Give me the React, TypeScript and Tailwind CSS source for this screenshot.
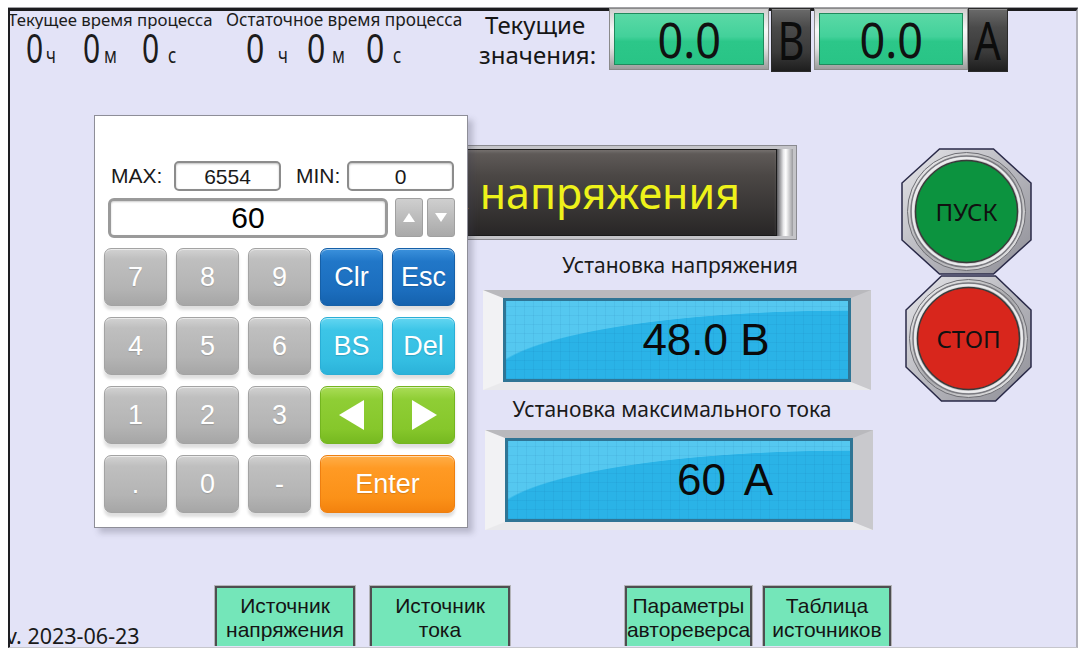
import React from "react";

const NOTO = "font-['Noto_Sans',sans-serif]";
const ARIAL = "font-['Liberation_Sans',Arial,sans-serif]";

type Tone = "gray" | "blue" | "cyan" | "green" | "orange";

const toneClass: Record<Tone, string> = {
  gray: "bg-[linear-gradient(180deg,#d2d2d2_0%,#bfbfbf_18%,#b4b4b4_70%,#a6a6a6_100%)] border-[#a3a3a3]",
  blue: "bg-[linear-gradient(180deg,#3b91dc_0%,#2177c8_22%,#1b6dbd_75%,#1562ae_100%)] border-[#1660a8]",
  cyan: "bg-[linear-gradient(180deg,#63d6f1_0%,#3cc5e7_22%,#34bee2_75%,#2bb2d9_100%)] border-[#2aaed6]",
  green: "bg-[linear-gradient(180deg,#aadd57_0%,#8fce35_22%,#86c72b_75%,#76b920_100%)] border-[#74b520]",
  orange: "bg-[linear-gradient(180deg,#ffae48_0%,#ff9a24_22%,#fb9118_75%,#f3820e_100%)] border-[#ee7f10]",
};

function Key({ tone = "gray", wide = false, children }: { tone?: Tone; wide?: boolean; children: React.ReactNode }) {
  return (
    <div
      className={`${toneClass[tone]} ${wide ? "col-span-2" : ""} h-[58px] rounded-[7px] border flex items-center justify-center text-white text-[27px] ${ARIAL} shadow-[inset_0_1px_0_rgba(255,255,255,0.55),0_4px_3px_rgba(0,0,0,0.13)] [text-shadow:0_1px_1px_rgba(0,0,0,0.15)]`}
    >
      {children}
    </div>
  );
}

function Triangle({ dir }: { dir: "left" | "right" }) {
  return (
    <svg width="30" height="32" viewBox="0 0 30 32">
      {dir === "left" ? <polygon points="27,1 27,31 2,16" fill="#fff" /> : <polygon points="3,1 3,31 28,16" fill="#fff" />}
    </svg>
  );
}

function Keypad() {
  return (
    <div className="absolute left-[94px] top-[115px] w-[374px] h-[413px] bg-white border border-[#8e8e98] shadow-[5px_5px_6px_rgba(60,60,80,0.25)] pt-[45px]">
      {/* limits */}
      <div className={`flex items-center h-[30px] ${ARIAL} text-[21px] text-[#1a1a1a]`}>
        <span className="ml-[16px] w-[63px]">MAX:</span>
        <div className="w-[107px] h-[30px] rounded-[5px] border-2 border-[#8c8c8c] shadow-[inset_0_1px_2px_rgba(0,0,0,0.25)] flex items-center justify-center text-[21px] leading-none">6554</div>
        <span className="ml-[15px] w-[51px]">MIN:</span>
        <div className="w-[107px] h-[30px] rounded-[5px] border-2 border-[#8c8c8c] shadow-[inset_0_1px_2px_rgba(0,0,0,0.25)] flex items-center justify-center text-[21px] leading-none">0</div>
      </div>
      {/* current entry */}
      <div className="flex mt-[7px] h-[40px]">
        <div className={`ml-[13px] w-[280px] h-[40px] rounded-[6px] border-[3px] border-[#9a9a9a] shadow-[inset_0_1px_2px_rgba(0,0,0,0.2)] flex items-center justify-center ${ARIAL} text-[30px] text-black leading-none`}>60</div>
        <div className="ml-[7px] w-[28px] h-[39px] rounded-[3px] bg-[linear-gradient(180deg,#cfcfcf,#a9a9a9)] border border-[#a0a0a0] flex items-center justify-center">
          <svg width="12" height="9" viewBox="0 0 12 9"><polygon points="6,0 12,9 0,9" fill="#fff" /></svg>
        </div>
        <div className="ml-[4px] w-[28px] h-[39px] rounded-[3px] bg-[linear-gradient(180deg,#cfcfcf,#a9a9a9)] border border-[#a0a0a0] flex items-center justify-center">
          <svg width="12" height="9" viewBox="0 0 12 9"><polygon points="0,0 12,0 6,9" fill="#fff" /></svg>
        </div>
      </div>
      {/* keys */}
      <div className="ml-[9px] mt-[10px] grid grid-cols-[63px_63px_63px_63px_63px] gap-x-[9px] gap-y-[11px]">
        <Key>7</Key>
        <Key>8</Key>
        <Key>9</Key>
        <Key tone="blue">Clr</Key>
        <Key tone="blue">Esc</Key>
        <Key>4</Key>
        <Key>5</Key>
        <Key>6</Key>
        <Key tone="cyan">BS</Key>
        <Key tone="cyan">Del</Key>
        <Key>1</Key>
        <Key>2</Key>
        <Key>3</Key>
        <Key tone="green"><Triangle dir="left" /></Key>
        <Key tone="green"><Triangle dir="right" /></Key>
        <Key>.</Key>
        <Key>0</Key>
        <Key>-</Key>
        <Key tone="orange" wide>Enter</Key>
      </div>
    </div>
  );
}

function GreenReadout({ w }: { w: string }) {
  return (
    <div className={`${w} h-[62px] p-[4px] border border-[#8a8a8a] bg-[linear-gradient(180deg,#cfcfcf_0%,#f7f7f7_35%,#e2e2e2_65%,#9c9c9c_100%)]`}>
      <div className="h-full border border-[#1f8a5c] bg-[linear-gradient(180deg,#5ad9a6_0%,#43d19a_45%,#2cc789_55%,#29c486_100%)] flex items-center justify-center">
        <span className={`${NOTO} text-[50px] leading-[50px] text-[#111] inline-block scale-x-90`}>0.0</span>
      </div>
    </div>
  );
}

function UnitTile({ children }: { children: React.ReactNode }) {
  return (
    <div className="w-[40px] h-[64px] bg-[linear-gradient(180deg,#6a6a6a_0%,#4a4a4a_30%,#3a3a3a_70%,#1e1e1e_100%)] border border-[#2a2a2a] flex items-center justify-center shadow-[inset_0_1px_0_rgba(255,255,255,0.25)]">
      <span className={`${NOTO} text-[52px] leading-[56px] text-[#0c0c0c] inline-block scale-x-80`}>{children}</span>
    </div>
  );
}

function BlueReadout({ shift, children }: { shift: string; children: React.ReactNode }) {
  return (
    <div className="w-[388px] h-[100px] border border-[#8f8f96] border-l-[20px] border-l-[#f2f2f4] border-t-[8px] border-t-[#b9b9bd] border-r-[20px] border-r-[#c9c9cd] border-b-[8px] border-b-[#e9e9ec]">
      <div className="h-full border-[3px] border-[#2f7595] bg-[repeating-linear-gradient(90deg,rgba(10,80,140,0.07)_0_1px,transparent_1px_9px),repeating-linear-gradient(0deg,rgba(10,80,140,0.07)_0_1px,transparent_1px_9px),radial-gradient(ellipse_105%_88%_at_100%_100%,#2ab3e7_99%,#55c8f0_100%)] flex items-center justify-center">
        <span className={`${ARIAL} text-[44px] leading-none text-[#0a0a0a] whitespace-pre ${shift}`}>{children}</span>
      </div>
    </div>
  );
}

function Pushbutton({ w, color, label }: { w: number; color: string; label: string }) {
  const id = label === "ПУСК" ? "a" : "b";
  const cx = w / 2;
  const c = 8 + (w - 122) * 0.5;
  return (
    <div className="relative">
      <svg width={w} height="127" viewBox={`0 0 ${w} 127`}>
        <defs>
          <linearGradient id={`m${id}`} x1="0" y1="0" x2="1" y2="1">
            <stop offset="0" stopColor="#e6e6ea" />
            <stop offset="0.5" stopColor="#b8b8be" />
            <stop offset="1" stopColor="#8e8e96" />
          </linearGradient>
          <linearGradient id={`r${id}`} x1="0" y1="0" x2="1" y2="1">
            <stop offset="0" stopColor="#fafafa" />
            <stop offset="0.5" stopColor="#a8a8ac" />
            <stop offset="1" stopColor="#f0f0f0" />
          </linearGradient>
        </defs>
        <polygon
          points={`${c + 26},1 ${w - c - 26},1 ${w - 1},${35} ${w - 1},${92} ${w - c - 26},126 ${c + 26},126 1,${92} 1,${35}`}
          fill={`url(#m${id})`}
          stroke="#2a2a48"
          strokeWidth="1.5"
        />
        <circle cx={cx} cy="63.5" r="59" fill={`url(#r${id})`} stroke="#6e6e74" strokeWidth="1" />
        <circle cx={cx} cy="63.5" r="55.5" fill="none" stroke="#7a7a80" strokeWidth="1.5" />
        <circle cx={cx} cy="63.5" r="53.5" fill="none" stroke="#ececee" strokeWidth="2" />
        <circle cx={cx} cy="63.5" r="51" fill={color} stroke="#3a3a3a" strokeWidth="1.5" />
      </svg>
      <span className={`absolute inset-0 flex items-center justify-center ${NOTO} text-[24px] text-[#111]`}>{label}</span>
    </div>
  );
}

function NavButton({ w, ml, lines }: { w: string; ml: string; lines: [string, string] }) {
  return (
    <div className={`${w} ${ml} h-[64px] shrink-0 border border-[#b4b4b8] p-0`}>
      <div className={`h-full border-2 border-[#4e4e50] bg-[#74e6b9] flex flex-col items-center pt-[6px] ${ARIAL} text-[21px] leading-[24px] text-[#141414] whitespace-nowrap`}>
        <span>{lines[0]}</span>
        <span>{lines[1]}</span>
      </div>
    </div>
  );
}

export default function App() {
  return (
    <div className="relative w-[1080px] h-[648px] bg-white overflow-hidden">
      <div className="ml-[8px] mt-[8px] w-[1070px] h-[640px] bg-[#e3e3f7] border-l-2 border-l-[#1e1e22] border-t-[3px] border-t-[#1c1c1e] border-r-2 border-r-[#b2b2ba] border-b border-b-[#c6c6cc] shadow-[0_-1px_0_#a0a0a4]">
        {/* header row */}
        <div className="flex h-[61px] text-[#1c1c1c]">
          <div className={`w-[216px] ${NOTO}`}>
            <div className="overflow-hidden">
              <div className="-ml-[2px] text-[16.8px] leading-[18px] whitespace-nowrap">Текущее время процесса</div>
            </div>
            <div className="flex items-baseline mt-[-3px]">
              <span className="ml-[16px] w-[57px] inline-flex items-baseline">
                <span className="inline-block w-[20px] text-[40px] leading-[44px] scale-x-75 origin-left">0</span>
                <span className="inline-block text-[21px] scale-x-80 origin-left">ч</span>
              </span>
              <span className="w-[59px] inline-flex items-baseline">
                <span className="inline-block w-[21px] text-[40px] leading-[44px] scale-x-75 origin-left">0</span>
                <span className="inline-block text-[21px] scale-x-80 origin-left">м</span>
              </span>
              <span className="inline-flex items-baseline">
                <span className="inline-block w-[26px] text-[40px] leading-[44px] scale-x-75 origin-left">0</span>
                <span className="inline-block text-[21px] scale-x-80 origin-left">с</span>
              </span>
            </div>
          </div>
          <div className={`w-[253px] ${NOTO}`}>
            <div className="text-[17.2px] leading-[18px] whitespace-nowrap">Остаточное время процесса</div>
            <div className="flex items-baseline mt-[-3px]">
              <span className="ml-[20px] w-[61px] inline-flex items-baseline">
                <span className="inline-block w-[32px] text-[40px] leading-[44px] scale-x-80 origin-left">0</span>
                <span className="inline-block text-[21px] scale-x-80 origin-left">ч</span>
              </span>
              <span className="w-[59px] inline-flex items-baseline">
                <span className="inline-block w-[25px] text-[40px] leading-[44px] scale-x-80 origin-left">0</span>
                <span className="inline-block text-[21px] scale-x-80 origin-left">м</span>
              </span>
              <span className="inline-flex items-baseline">
                <span className="inline-block w-[27px] text-[40px] leading-[44px] scale-x-80 origin-left">0</span>
                <span className="inline-block text-[21px] scale-x-80 origin-left">с</span>
              </span>
            </div>
          </div>
          <div className={`w-[130px] ${NOTO} text-[24px] leading-[30px] text-[#161616]`}>
            <div className="ml-[6px] mt-[-1px]">Текущие</div>
            <div>значения:</div>
          </div>
          <div className="flex -mt-[3px]">
            <GreenReadout w="w-[160px]" />
            <div className="ml-[2px]"><UnitTile>B</UnitTile></div>
            <div className="ml-[3px]"><GreenReadout w="w-[154px]" /></div>
            <UnitTile>A</UnitTile>
          </div>
        </div>

        {/* main area */}
        <div className="flex h-[513px]">
          <div className="ml-[473px] w-[390px] flex flex-col">
            {/* title strip */}
            <div className="-ml-[183px] mt-[73px] w-[497px] h-[95px] border border-[#8a8a90] bg-[#c4c4c8] p-[3px] flex">
              <div className="flex-1 min-w-0 overflow-hidden border border-[#1a1a1a] bg-[linear-gradient(180deg,#625d5b_0%,#4b4745_30%,#3a3736_65%,#282626_100%)] flex items-center justify-end pr-[36px] shadow-[inset_0_2px_3px_rgba(255,255,255,0.12)]">
                <span className={`${NOTO} text-[43px] leading-none text-[#eef21a] whitespace-nowrap shrink-0`}>Источник напряжения</span>
              </div>
              <div className="w-[16px] shrink-0 bg-[linear-gradient(90deg,#5a5a5e_0%,#e8e8ea_40%,#ffffff_55%,#9a9a9e_100%)]" />
            </div>
            <div className={`h-[50px] pt-[12px] text-center ${NOTO} text-[21px] leading-[26px] text-[#1a1a1a] ml-[4px]`}>Установка напряжения</div>
            <BlueReadout shift="ml-[58px]">48.0 B</BlueReadout>
            <div className={`h-[40px] flex items-center justify-center ${NOTO} text-[21px] text-[#1a1a1a] -ml-[12px]`}>Установка максимального тока</div>
            <div className="ml-[2px]"><BlueReadout shift="ml-[92px] [word-spacing:8px]">60 A</BlueReadout></div>
          </div>
          <div className="ml-[28px] mt-[76px] flex flex-col">
            <Pushbutton w={131} color="#0c933f" label="ПУСК" />
            <div className="ml-[4px]">
              <Pushbutton w={127} color="#d8261c" label="СТОП" />
            </div>
          </div>
        </div>

        {/* footer */}
        <div className="flex h-[61px] overflow-hidden">
          <div className="w-[197px] shrink-0 self-end overflow-hidden">
            <div className={`-ml-[4px] mb-[-4px] ${NOTO} text-[21.5px] leading-[28px] text-[#1a1a1a] whitespace-nowrap`}>v. 2023-06-23</div>
          </div>
          <NavButton w="w-[142px]" ml="ml-[7px]" lines={["Источник", "напряжения"]} />
          <NavButton w="w-[142px]" ml="ml-[13px]" lines={["Источник", "тока"]} />
          <NavButton w="w-[129px]" ml="ml-[113px]" lines={["Параметры", "автореверса"]} />
          <NavButton w="w-[130px]" ml="ml-[9px]" lines={["Таблица", "источников"]} />
        </div>
      </div>
      <Keypad />
    </div>
  );
}
